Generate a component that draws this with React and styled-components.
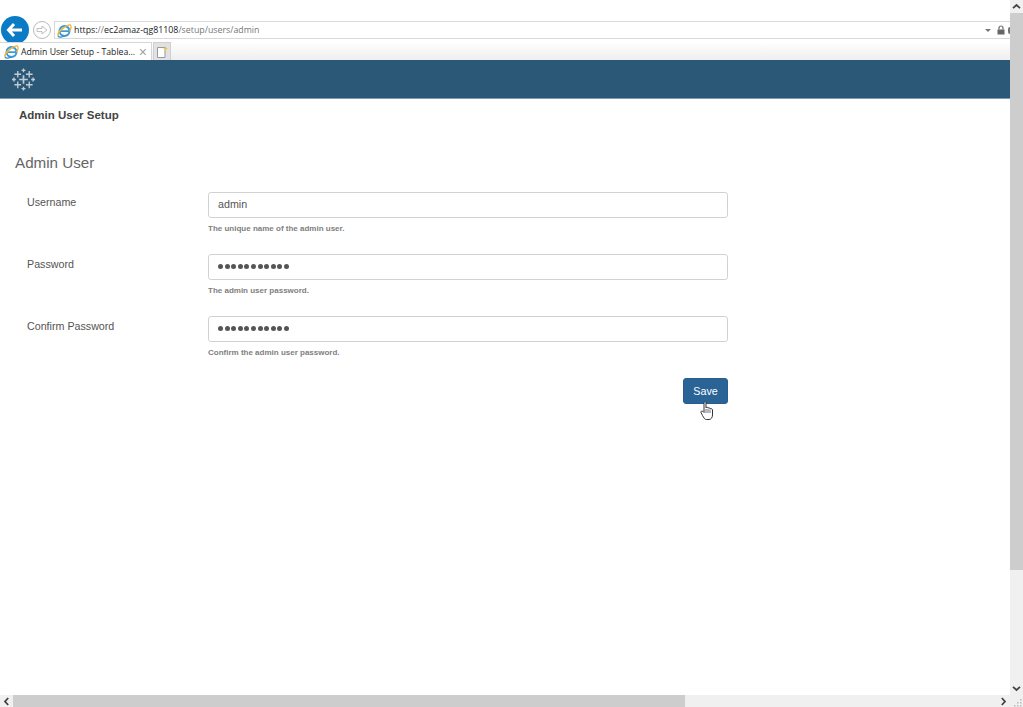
import React from "react";
import styled, { createGlobalStyle } from "styled-components";

const Global = createGlobalStyle`
  html, body { margin: 0; padding: 0; background: #fff; overflow: hidden; }
  body { font-family: "Liberation Sans", Arial, sans-serif; }
`;

const Window = styled.div`
  width: 1023px;
  height: 707px;
  display: grid;
  grid-template-columns: 1010px 13px;
  grid-template-rows: 695px 12px;
  overflow: hidden;
`;

const Main = styled.div`
  display: flex;
  flex-direction: column;
  min-width: 0;
`;

const AddressRow = styled.div`
  height: 42px;
  box-sizing: border-box;
  padding: 16px 0 0 1px;
  display: flex;
  align-items: flex-start;
`;

const BackButton = styled.div`
  width: 28px;
  height: 28px;
  border-radius: 50%;
  background: #0a7bc4;
  display: flex;
  align-items: center;
  justify-content: center;
  flex: none;
`;

const ForwardButton = styled.div`
  width: 18px;
  height: 18px;
  margin: 5px 0 0 4px;
  box-sizing: border-box;
  border: 1px solid #b9b9b9;
  border-radius: 50%;
  display: flex;
  align-items: center;
  justify-content: center;
  flex: none;
`;

const AddressBar = styled.div`
  margin: 5px 0 0 3px;
  flex: 1;
  height: 18px;
  box-sizing: border-box;
  border: 1px solid #d9d9d9;
  border-right: none;
  display: flex;
  align-items: center;
  padding-left: 2px;
  overflow: hidden;
`;

const Url = styled.span`
  margin-left: 2px;
  color: #222;
  flex: 1;
  font-family: "Open Sans", sans-serif;
  font-size: 8.8px;
`;

const UrlMuted = styled.span`
  color: #777;
`;

const DropCaret = styled.div`
  width: 0;
  height: 0;
  border-left: 3px solid transparent;
  border-right: 3px solid transparent;
  border-top: 3px solid #777;
  margin-right: 6px;
`;

const LockEdge = styled.div`
  width: 2px;
  height: 7px;
  margin-left: 3px;
  border-radius: 2px 0 0 2px;
  background: #777;
`;

const TabRow = styled.div`
  height: 18px;
  display: flex;
  background: linear-gradient(#ffffff, #eeeeee);
`;

const Tab = styled.div`
  width: 152px;
  box-sizing: border-box;
  background: #fff;
  border: 1px solid #d6d6d6;
  border-bottom: none;
  border-left: none;
  padding: 0 4px;
  display: flex;
  align-items: center;
`;

const TabTitle = styled.span`
  flex: 1;
  margin-left: 2px;
  font-family: "Open Sans", sans-serif;
  font-size: 8.7px;
  color: #222;
  white-space: nowrap;
`;

const TabClose = styled.span`
  font-size: 14px;
  color: #a0a0a0;
  line-height: 1;
`;

const NewTab = styled.div`
  width: 18px;
  box-sizing: border-box;
  margin-left: 1px;
  background: #e2e2e2;
  border: 1px solid #cfcfcf;
  border-bottom: none;
  display: flex;
  align-items: center;
  justify-content: center;
`;

const Banner = styled.div`
  height: 38px;
  flex: none;
  background: #2b5876;
  border-bottom: 1px solid #7f9bae;
  display: flex;
  align-items: center;
  padding-left: 12px;
`;

const Content = styled.div`
  position: relative;
  flex: 1;
  padding: 9px 0 0 15px;
`;

const PageTitle = styled.h1`
  margin: 0 0 0 4px;
  font-size: 11.5px;
  line-height: 14px;
  font-weight: 700;
  color: #444;
`;

const SectionTitle = styled.h2`
  margin: 31px 0 19px;
  font-size: 15.2px;
  line-height: 20px;
  font-weight: 400;
  color: #666;
`;

const Form = styled.form`
  width: 713px;
  display: flex;
  flex-direction: column;
  gap: 20px;
`;

const Row = styled.div`
  display: grid;
  grid-template-columns: 181px 520px;
  padding-left: 12px;
`;

const Label = styled.label`
  font-size: 10.7px;
  line-height: 20px;
  color: #555;
`;

const Field = styled.div`
  display: flex;
  flex-direction: column;
`;

const Input = styled.div`
  height: 26px;
  box-sizing: border-box;
  border: 1px solid #d2d2d2;
  border-radius: 3px;
  padding: 0 9px 2px;
  display: flex;
  align-items: center;
  font-size: 10.7px;
  color: #555;
`;

const Dots = styled.div`
  display: flex;
  gap: 1.6px;
`;

const Dot = styled.span`
  width: 5px;
  height: 5px;
  border-radius: 50%;
  background: #555;
`;

const Help = styled.div`
  margin-top: 6px;
  font-size: 8px;
  line-height: 10px;
  font-weight: 700;
  color: #808080;
`;

const Actions = styled.div`
  display: flex;
  justify-content: flex-end;
  width: 713px;
  box-sizing: border-box;
`;

const SaveButton = styled.div`
  width: 45px;
  height: 26px;
  box-sizing: border-box;
  border: 1px solid #285e8e;
  border-radius: 3px;
  background: #2a6496;
  color: #fff;
  font-size: 10.7px;
  display: flex;
  align-items: center;
  justify-content: center;
`;

const Cursor = styled.svg`
  position: absolute;
  left: 700px;
  top: 302px;
`;

const VScroll = styled.div`
  background: #f0f0f0;
  display: flex;
  flex-direction: column;
`;

const HScroll = styled.div`
  background: #f0f0f0;
  display: flex;
`;

const ArrowCell = styled.div`
  width: 13px;
  height: ${p => (p.$horizontal ? 12 : 13)}px;
  flex: none;
  display: flex;
  align-items: center;
  justify-content: center;
`;

const VThumb = styled.div`
  height: 557px;
  background: #cdcdcd;
  flex: none;
`;

const HThumb = styled.div`
  width: 672px;
  background: #cdcdcd;
  flex: none;
`;

const Spacer = styled.div`
  flex: 1;
`;

const Corner = styled.div`
  background: #f0f0f0;
  display: flex;
  align-items: flex-end;
  justify-content: flex-end;
`;

const Chevron = ({ rotate }) => (
  <svg width="9" height="7" viewBox="0 0 9 7" style={{ transform: `rotate(${rotate}deg)` }}>
    <path d="M1 5.2 L4.5 2 L8 5.2" fill="none" stroke="#444" strokeWidth="1.8" />
  </svg>
);

const IeIcon = () => (
  <svg width="15" height="15" viewBox="0 0 14 14" style={{ flex: "none" }}>
    <circle cx="7" cy="7.5" r="4.6" fill="none" stroke="#3a9bdc" strokeWidth="2" />
    <path d="M3 7.6 H11.5" stroke="#3a9bdc" strokeWidth="1.6" />
    <path d="M1 12 C0 9 6 3 12 1.5" fill="none" stroke="#f2b632" strokeWidth="1.4" />
    <path d="M12 1.5 C14 3 13 6 11.5 7.5" fill="none" stroke="#f2b632" strokeWidth="1.2" />
    <path d="M1 12 C2 14 5 13 7 12" fill="none" stroke="#2f8fd0" strokeWidth="1.2" />
  </svg>
);

const Plus = ({ x, y, r, w = 1.4 }) => (
  <path d={`M${x - r} ${y} H${x + r} M${x} ${y - r} V${y + r}`} stroke="#fff" strokeWidth={w} opacity="0.7" />
);

const TableauLogo = () => (
  <svg width="23" height="23" viewBox="0 0 24 24">
    <Plus x={12} y={12} r={4.5} w={1.8} />
    <Plus x={6} y={6.5} r={3.5} />
    <Plus x={18} y={6.5} r={3.5} />
    <Plus x={6} y={17.5} r={3.5} />
    <Plus x={18} y={17.5} r={3.5} />
    <Plus x={12} y={2.5} r={2} />
    <Plus x={12} y={21.5} r={2} />
    <Plus x={2} y={12} r={2} />
    <Plus x={22} y={12} r={2} />
  </svg>
);

const fields = [
  { label: "Username", value: "admin", help: "The unique name of the admin user." },
  { label: "Password", dots: 11, help: "The admin user password." },
  { label: "Confirm Password", dots: 11, help: "Confirm the admin user password." },
];

export default function App() {
  return (
    <Window>
      <Global />
      <Main>
        <AddressRow>
          <BackButton>
            <svg width="18" height="16" viewBox="0 0 18 16">
              <path d="M8 2 L2.5 8 L8 14 M3 8 H16" fill="none" stroke="#fff" strokeWidth="3" />
            </svg>
          </BackButton>
          <ForwardButton>
            <svg width="12" height="10" viewBox="0 0 12 10">
              <path d="M1 3.4 H6 V1 L11 5 L6 9 V6.6 H1 Z" fill="none" stroke="#bdbdbd" strokeWidth="1" />
            </svg>
          </ForwardButton>
          <AddressBar>
            <IeIcon />
            <Url>
              https:<UrlMuted>//</UrlMuted>ec2amaz-qg81108<UrlMuted>/setup/users/admin</UrlMuted>
            </Url>
            <DropCaret />
            <svg width="8" height="10" viewBox="0 0 8 10">
              <path d="M2 4.5 V3 a2 2 0 0 1 4 0 V4.5" fill="none" stroke="#666" strokeWidth="1.2" />
              <rect x="0.5" y="4.5" width="7" height="5" fill="#666" />
            </svg>
            <LockEdge />
          </AddressBar>
        </AddressRow>
        <TabRow>
          <Tab>
            <IeIcon />
            <TabTitle>Admin User Setup - Tablea...</TabTitle>
            <TabClose>×</TabClose>
          </Tab>
          <NewTab>
            <svg width="14" height="14" viewBox="0 0 14 14">
              <path d="M2.5 2.5 H10 V12.5 H2.5 Z" fill="#fff" stroke="#999" strokeWidth="1" />
              <path d="M10.5 1 L11.2 2.8 L13 3.5 L11.2 4.2 L10.5 6 L9.8 4.2 L8 3.5 L9.8 2.8 Z" fill="#f5c33b" />
            </svg>
          </NewTab>
        </TabRow>
        <Banner>
          <TableauLogo />
        </Banner>
        <Content>
          <PageTitle>Admin User Setup</PageTitle>
          <SectionTitle>Admin User</SectionTitle>
          <Form>
            {fields.map(f => (
              <Row key={f.label}>
                <Label>{f.label}</Label>
                <Field>
                  <Input>
                    {f.dots ? (
                      <Dots>
                        {Array.from({ length: f.dots }).map((_, i) => <Dot key={i} />)}
                      </Dots>
                    ) : f.value}
                  </Input>
                  <Help>{f.help}</Help>
                </Field>
              </Row>
            ))}
            <Actions>
              <SaveButton>Save</SaveButton>
            </Actions>
          </Form>
          <Cursor width="14" height="20" viewBox="0 0 14 20">
            <path
              d="M4 1.5 C4 .5 6 .5 6 1.5 V7 C6.5 6 8 6 8 7.2 C8.5 6.4 10 6.6 10 7.8 C10.6 7.2 12.5 7.6 12.5 9 V14 C12.5 16.5 11 18.5 9 18.5 H6.5 C4.5 18.5 4 17 2.5 14.5 L1 11.5 C.5 10.3 2 9.5 3 10.5 L4 11.5 Z"
              fill="#fff"
              stroke="#333"
              strokeWidth="1"
            />
            <path d="M6 8 V12 M8 8 V12 M10 8.5 V12" stroke="#333" strokeWidth="0.7" />
          </Cursor>
        </Content>
      </Main>
      <VScroll>
        <ArrowCell><Chevron rotate={0} /></ArrowCell>
        <VThumb />
        <Spacer />
        <ArrowCell><Chevron rotate={180} /></ArrowCell>
      </VScroll>
      <HScroll>
        <ArrowCell $horizontal><Chevron rotate={-90} /></ArrowCell>
        <HThumb />
        <Spacer />
        <ArrowCell $horizontal><Chevron rotate={90} /></ArrowCell>
      </HScroll>
      <Corner>
        <svg width="10" height="10" viewBox="0 0 10 10">
          <path d="M7 2h1.5v1.5H7z M4 5h1.5v1.5H4z M7 5h1.5v1.5H7z M1 8h1.5v1.5H1z M4 8h1.5v1.5H4z M7 8h1.5v1.5H7z" fill="#bbb" />
        </svg>
      </Corner>
    </Window>
  );
}
